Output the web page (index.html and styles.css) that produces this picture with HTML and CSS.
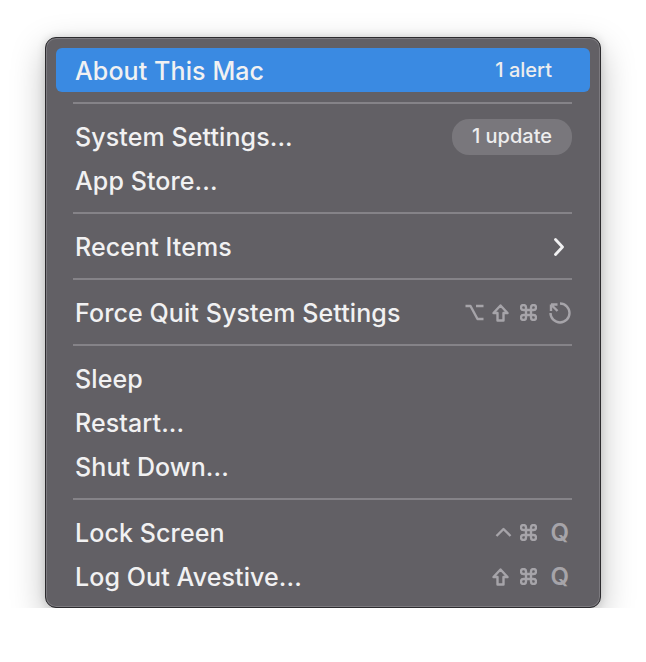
FILE: index.html
```html
<!DOCTYPE html>
<html lang="en">

<head>
    <meta charset="UTF-8">
    <meta name="viewport" content="width=device-width, initial-scale=1.0">
    <title>Apple Menu</title>
    <link rel="stylesheet" href="styles.css">
</head>

<body>
    <div class="menu">
        <div class="item active">
            <span class="label">About This Mac</span>
            <span class="badge plain">1 alert</span>
        </div>
        <div class="sep"></div>

        <div class="item">
            <span class="label">System Settings...</span>
            <span class="badge">1 update</span>
        </div>
        <div class="item">
            <span class="label">App Store...</span>
        </div>
        <div class="sep"></div>

        <div class="item">
            <span class="label">Recent Items</span>
            <svg class="chevron" width="12" height="20" viewBox="0 0 12 20">
                <path d="M2.5 2.5 L9.5 10 L2.5 17.5" />
            </svg>
        </div>
        <div class="sep"></div>

        <div class="item">
            <span class="label">Force Quit System Settings</span>
            <span class="keys">
                <!-- option -->
                <svg class="key" width="19" height="17" viewBox="0 0 19 17">
                    <path d="M0.5 2 H5.5 L12.5 15 H18.5 M11 2 H18.5" />
                </svg>
                <!-- shift -->
                <svg class="key gap8" width="17" height="18" viewBox="0 0 17 18">
                    <path d="M8.5 1.5 L15.5 9 H11.5 V16.5 H5.5 V9 H1.5 Z" />
                </svg>
                <!-- command -->
                <svg class="key gap11" width="17" height="17" viewBox="-1 -1 17 17">
                    <path d="M5 12.5 V2.5 A2.5 2.5 0 1 0 2.5 5 H12.5 A2.5 2.5 0 1 0 10 2.5 V12.5 A2.5 2.5 0 1 0 12.5 10 H2.5 A2.5 2.5 0 1 0 5 12.5" />
                </svg>
                <!-- restart -->
                <svg class="key gap11" width="24" height="22" viewBox="0 0 24 22">
                    <path d="M12 1.5 A9.5 9.5 0 1 1 2.5 11" />
                    <path d="M3 2.5 L9.5 9 M3 2.5 H9.5 M3 2.5 V9" />
                </svg>
            </span>
        </div>
        <div class="sep"></div>

        <div class="item">
            <span class="label">Sleep</span>
        </div>
        <div class="item">
            <span class="label">Restart...</span>
        </div>
        <div class="item">
            <span class="label">Shut Down...</span>
        </div>
        <div class="sep"></div>

        <div class="item">
            <span class="label">Lock Screen</span>
            <span class="keys">
                <svg class="key" width="17" height="16" viewBox="0 0 17 16">
                    <path d="M1.5 11 L8.5 4 L15.5 11" />
                </svg>
                <svg class="key gap8" width="17" height="17" viewBox="-1 -1 17 17">
                    <path d="M5 12.5 V2.5 A2.5 2.5 0 1 0 2.5 5 H12.5 A2.5 2.5 0 1 0 10 2.5 V12.5 A2.5 2.5 0 1 0 12.5 10 H2.5 A2.5 2.5 0 1 0 5 12.5" />
                </svg>
                <span class="q">Q</span>
            </span>
        </div>
        <div class="item">
            <span class="label">Log Out Avestive...</span>
            <span class="keys">
                <svg class="key" width="17" height="18" viewBox="0 0 17 18">
                    <path d="M8.5 1.5 L15.5 9 H11.5 V16.5 H5.5 V9 H1.5 Z" />
                </svg>
                <svg class="key gap11" width="17" height="17" viewBox="-1 -1 17 17">
                    <path d="M5 12.5 V2.5 A2.5 2.5 0 1 0 2.5 5 H12.5 A2.5 2.5 0 1 0 10 2.5 V12.5 A2.5 2.5 0 1 0 12.5 10 H2.5 A2.5 2.5 0 1 0 5 12.5" />
                </svg>
                <span class="q">Q</span>
            </span>
        </div>
    </div>
</body>

</html>
```

FILE: styles.css
```css
body {
    margin: 0;
    padding: 37px 0 0 45px;
    background: #ffffff;
    font-family: Inter, "Noto Sans", sans-serif;
}

.menu {
    box-sizing: border-box;
    width: 556px;
    padding: 10px 10px 9px;
    background: #626065;
    border: 1px solid #2c2b2e;
    border-radius: 11px;
    box-shadow: inset 0 0 0 1px #7c7a7f, 0 12px 34px rgba(0, 0, 0, 0.26), 0 0 8px rgba(0, 0, 0, 0.14);
}

.item {
    box-sizing: border-box;
    display: flex;
    align-items: center;
    justify-content: space-between;
    height: 44px;
    padding: 1px 18px 0 19px;
    border-radius: 6px;
    color: #f1f1f2;
}

.item.active {
    background: #3a8ae2;
}

.label {
    font-size: 25px;
    font-weight: 500;
    letter-spacing: 0.1px;
}

.badge {
    padding: 5px 20px 7px;
    border-radius: 17px;
    background: #79777c;
    color: #ededee;
    font-size: 20px;
    font-weight: 500;
}

.badge.plain {
    background: none;
}

.sep {
    height: 22px;
    margin: 0 18px 0 17px;
    display: flex;
    align-items: center;
}

.sep::before {
    content: "";
    flex: 1;
    height: 2px;
    background: #858388;
}

.chevron {
    margin-right: 7px;
    fill: none;
    stroke: #f1f1f2;
    stroke-width: 2.8;
    stroke-linecap: round;
    stroke-linejoin: round;
}

.keys {
    display: flex;
    align-items: center;
}

.key {
    fill: none;
    stroke: #a6a4a9;
    stroke-width: 2.4;
    stroke-linejoin: round;
}

.gap8 {
    margin-left: 8px;
}

.gap11 {
    margin-left: 11px;
}

.q {
    margin-left: 13px;
    margin-right: 3px;
    color: #a6a4a9;
    font-size: 24px;
    font-weight: 600;
}
```
